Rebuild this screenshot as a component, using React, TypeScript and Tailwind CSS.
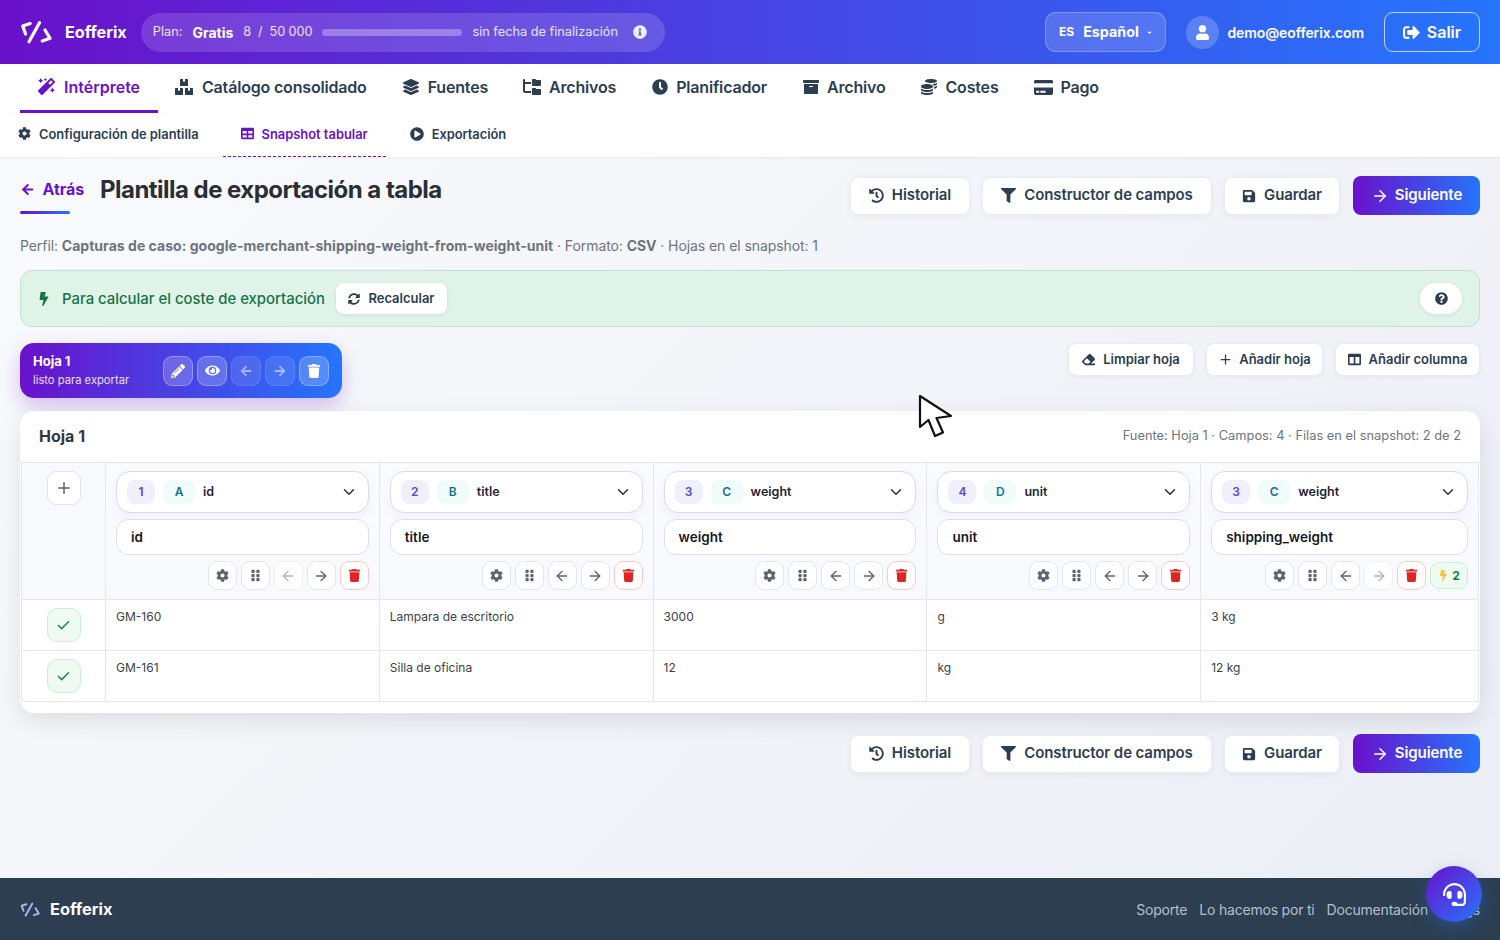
import React from "react";
import {
  FaMagic, FaBoxes, FaLayerGroup, FaClock, FaArchive, FaCoins, FaCreditCard, FaCog, FaTable, FaPlayCircle,
  FaHistory, FaFilter, FaSave, FaSignOutAlt, FaUser, FaInfoCircle, FaBolt, FaSyncAlt, FaQuestionCircle,
  FaPencilAlt, FaEye, FaTrash, FaEraser, FaColumns, FaGripVertical, FaHeadset, FaArrowLeft, FaArrowRight, FaCaretDown,
} from "react-icons/fa";
import { FaFolderTree } from "react-icons/fa6";
import { LuArrowLeft, LuArrowRight, LuCheck, LuChevronDown, LuPlus } from "react-icons/lu";

function Logo({ className }: { className: string }) {
  return (
    <svg viewBox="0 0 32 24" className={className} fill="none" stroke="currentColor" strokeWidth="3.2" strokeLinecap="round" strokeLinejoin="round">
      <path d="M10.2 3.6 L2.7 6 L5.6 14" />
      <path d="M19.5 2.7 L9 21.7" />
      <path d="M25 10 L30 18.3 L22.3 21" />
    </svg>
  );
}

function ActionButtons() {
  return (
    <div className="flex items-center gap-[12px] tracking-[-0.1px]">
      <button className="flex h-[38px] w-[120px] items-center justify-center gap-[8px] rounded-lg border border-[#e9ecf1] bg-white text-[15px] font-semibold text-[#2c3e50] shadow-[0_2px_6px_rgba(0,0,0,0.05)]">
        <FaHistory className="text-[15px]" />Historial
      </button>
      <button className="flex h-[38px] w-[230px] items-center justify-center gap-[8px] rounded-lg border border-[#e9ecf1] bg-white text-[15px] font-semibold text-[#2c3e50] shadow-[0_2px_6px_rgba(0,0,0,0.05)]">
        <FaFilter className="text-[15px]" />Constructor de campos
      </button>
      <button className="flex h-[38px] w-[116px] items-center justify-center gap-[8px] rounded-lg border border-[#e9ecf1] bg-white text-[15px] font-semibold text-[#2c3e50] shadow-[0_2px_6px_rgba(0,0,0,0.05)]">
        <FaSave className="text-[14px]" />Guardar
      </button>
      <button className="ml-px flex h-[39px] w-[127px] items-center justify-center gap-[6px] rounded-lg bg-[linear-gradient(90deg,#6a11cb,#2575fc)] text-[15px] font-semibold text-white">
        <LuArrowRight className="text-[18px]" />Siguiente
      </button>
    </div>
  );
}

function MiniBtn({ children, tone = "normal" }: { children: React.ReactNode; tone?: "normal" | "off" | "red" }) {
  const cls =
    tone === "red"
      ? "border-[#f6c9c9] text-[#dc2626]"
      : tone === "off"
        ? "border-[#eef0f4] text-[#b0b5bc]"
        : "border-[#e2e5ea] text-[#5a6472]";
  return <span className={`flex h-[29px] w-[29px] items-center justify-center rounded-[9px] border bg-white text-[13px] ${cls}`}>{children}</span>;
}

type Col = { n: string; l: string; src: string; name: string; leftOff?: boolean; rightOff?: boolean; badge?: boolean };
const cols: Col[] = [
  { n: "1", l: "A", src: "id", name: "id", leftOff: true },
  { n: "2", l: "B", src: "title", name: "title" },
  { n: "3", l: "C", src: "weight", name: "weight" },
  { n: "4", l: "D", src: "unit", name: "unit" },
  { n: "3", l: "C", src: "weight", name: "shipping_weight", rightOff: true, badge: true },
];

const rows = [
  ["GM-160", "Lampara de escritorio", "3000", "g", "3 kg"],
  ["GM-161", "Silla de oficina", "12", "kg", "12 kg"],
];

function HeaderCell({ c }: { c: Col }) {
  return (
    <div className="flex h-[136px] flex-col border-l border-[#e3e6ec] bg-[linear-gradient(180deg,#fafbfe,#f8f9fc)] px-[10px] pt-[8px]">
      <div className="flex h-[42px] items-center rounded-[14px] border border-[#dcd8ef] bg-white pl-[10px] pr-[10px] shadow-[0_4px_12px_rgba(106,17,203,0.05)]">
        <span className="flex h-[24px] w-[28px] items-center justify-center rounded-lg bg-[#eff0fc] text-[12px] font-semibold text-[#5b45d6]">{c.n}</span>
        <span className="ml-[8px] flex h-[24px] w-[32px] items-center justify-center rounded-lg bg-[#f0fbfb] text-[12px] font-semibold text-[#14708f]">{c.l}</span>
        <span className="ml-[8px] text-[12.5px] font-semibold text-[#1f2433]">{c.src}</span>
        <LuChevronDown className="ml-auto text-[18px] text-[#2b2f38]" />
      </div>
      <div className="mt-[6px] flex h-[36px] items-center rounded-[12px] border border-[#dfdcf0] bg-white pl-[14px] text-[13.5px] font-semibold text-[#15181f]">{c.name}</div>
      <div className="mt-[6px] flex items-center justify-end gap-[4px]">
        <MiniBtn><FaCog /></MiniBtn>
        <MiniBtn><FaGripVertical /></MiniBtn>
        <MiniBtn tone={c.leftOff ? "off" : "normal"}><LuArrowLeft className="text-[16px]" /></MiniBtn>
        <MiniBtn tone={c.rightOff ? "off" : "normal"}><LuArrowRight className="text-[16px]" /></MiniBtn>
        <MiniBtn tone="red"><FaTrash /></MiniBtn>
        {c.badge && (
          <span className="flex h-[27px] w-[38px] items-center justify-center gap-[3px] rounded-[9px] border border-[#c9efd4] bg-[#effbf2] text-[12px] font-bold text-[#15803d]">
            <FaBolt className="text-[11px] text-[#f5c542]" />2
          </span>
        )}
      </div>
    </div>
  );
}

export default function App() {
  return (
    <div className="relative flex h-[940px] w-[1500px] flex-col overflow-hidden bg-white font-['Inter',sans-serif]">
      <header className="flex h-[64px] shrink-0 items-center bg-[linear-gradient(90deg,#6a11cb,#2575fc)] pl-[20px] pr-[20px] text-white">
        <Logo className="h-[24px] w-[32px]" />
        <span className="ml-[13px] text-[16.2px] font-bold">Eofferix</span>
        <div className="ml-[14px] flex h-[39px] w-[524px] items-center rounded-[20px] bg-white/15 pl-[12px] text-[12.75px]">
          <span className="text-white/85">Plan:</span>
          <span className="ml-[10px] text-[14px] font-bold">Gratis</span>
          <span className="ml-[10px] tracking-[-0.1px] text-white/85">8&nbsp;&nbsp;/&nbsp;&nbsp;50 000</span>
          <span className="ml-[10px] h-[7px] w-[140px] rounded-full bg-white/30" />
          <span className="ml-[10px] text-white/85">sin fecha de finalización</span>
          <FaInfoCircle className="ml-[15px] text-[14px] text-white/90" />
        </div>
        <div className="ml-auto flex h-[40px] w-[121px] items-center justify-center rounded-[11px] border border-white/25 bg-white/15 text-[14.3px] font-bold">
          <span className="text-[12px]">ES</span>
          <span className="ml-[9px]">Español</span>
          <FaCaretDown className="ml-[7px] text-[7px]" />
        </div>
        <span className="ml-[20px] flex h-[33px] w-[33px] items-center justify-center rounded-full bg-white/20">
          <FaUser className="text-[15px]" />
        </span>
        <span className="ml-[8px] text-[14px] font-semibold tracking-[-0.1px]">demo@eofferix.com</span>
        <button className="ml-[20px] flex h-[40px] w-[96px] items-center justify-center gap-[7px] rounded-[9px] border border-white/70 text-[16px] font-semibold">
          <FaSignOutAlt className="text-[17px]" />Salir
        </button>
      </header>

      <nav className="flex h-[49px] shrink-0 items-start bg-white pl-[20px] text-[16px] font-semibold tracking-[-0.18px] text-[#2c3e50]">
        <a className="flex h-[49px] w-[138px] items-center gap-[9px] border-b-[3px] border-[#6a11cb] pb-[1px] pl-[18px] tracking-normal text-[#6a11cb]"><FaMagic className="text-[17px]" />Intérprete</a>
        <a className="ml-[17px] flex h-[46px] items-center gap-[9px]"><FaBoxes className="text-[18px]" />Catálogo consolidado</a>
        <a className="ml-[36px] flex h-[46px] items-center gap-[9px]"><FaLayerGroup className="text-[16px]" />Fuentes</a>
        <a className="ml-[35px] flex h-[46px] items-center gap-[8px]"><FaFolderTree className="text-[18px]" />Archivos</a>
        <a className="ml-[36px] flex h-[46px] items-center gap-[8px]"><FaClock className="text-[16px]" />Planificador</a>
        <a className="ml-[36px] flex h-[46px] items-center gap-[8px]"><FaArchive className="text-[16px]" />Archivo</a>
        <a className="ml-[35px] flex h-[46px] items-center gap-[9px]"><FaCoins className="text-[16px]" />Costes</a>
        <a className="ml-[35px] flex h-[46px] items-center gap-[8px]"><FaCreditCard className="text-[19px]" />Pago</a>
      </nav>

      <div className="z-10 flex h-[44px] shrink-0 items-center bg-white pl-[18px] text-[12.9px] font-semibold text-[#2c3e50] shadow-[0_1px_3px_rgba(0,0,0,0.06)]">
        <a className="flex items-center gap-[8px]"><FaCog className="-translate-y-px text-[13px]" />Configuración de plantilla</a>
        <a className="ml-[24px] flex h-[44px] w-[163px] items-center justify-center gap-[8px] border-b border-dashed border-[#6a11cb] pt-px text-[#6a11cb]"><FaTable className="-translate-y-[2px] text-[13px]" />Snapshot tabular</a>
        <a className="ml-[24px] flex items-center gap-[8px] tracking-[-0.05px]"><FaPlayCircle className="-translate-y-px text-[14px]" />Exportación</a>
      </div>

      <main className="flex min-h-0 flex-1 flex-col bg-[linear-gradient(135deg,#f9fafd,#ebeef5)] px-[20px] pt-[19px]">
        <div className="flex items-start justify-between">
          <div className="flex items-start">
            <div className="w-[64px]">
              <a className="flex items-center gap-[7px] pt-[1px] text-[16px] font-bold tracking-[-0.1px] text-[#6a11cb]"><LuArrowLeft className="text-[17px]" strokeWidth={3} />Atrás</a>
              <div className="mt-[10px] h-[3px] w-[50px] rounded-full bg-[linear-gradient(90deg,#6a11cb,#2575fc)]" />
            </div>
            <h1 className="ml-[16px] text-[24px] leading-[28px] font-bold tracking-[-0.53px] text-[#2b2f33]">Plantilla de exportación a tabla</h1>
          </div>
          <ActionButtons />
        </div>

        <p className="mt-[21px] text-[14px] leading-[20px] tracking-[-0.08px] text-[#6c757d]">
          Perfil: <b className="font-bold tracking-[0.03px]">Capturas de caso: google-merchant-shipping-weight-from-weight-unit</b> · Formato: <b className="font-bold">CSV</b> · Hojas en el snapshot: 1
        </p>

        <div className="mt-[14px] flex h-[57px] items-center rounded-[12px] border border-[#bce5cd] bg-[#dff3e8] pl-[16px] pr-[17px]">
          <FaBolt className="text-[14px] text-[#157347]" />
          <span className="ml-[11px] pt-px text-[14.9px] font-medium text-[#157347]">Para calcular el coste de exportación</span>
          <button className="ml-[11px] flex h-[31px] w-[111px] items-center justify-center gap-[8px] rounded-lg bg-white text-[13px] font-semibold text-[#2c3e50] shadow-[0_1px_4px_rgba(0,0,0,0.08)]">
            <FaSyncAlt className="text-[12px]" />Recalcular
          </button>
          <span className="ml-auto flex h-[31px] w-[42px] items-center justify-center rounded-full bg-white text-[13px] text-[#2c3e50] shadow-[0_1px_4px_rgba(0,0,0,0.08)]">
            <FaQuestionCircle />
          </span>
        </div>

        <div className="mt-[16px] flex items-center justify-between">
          <div className="flex h-[55px] w-[322px] items-center rounded-[14px] bg-[linear-gradient(90deg,#6a11cb,#2575fc)] pl-[13px] pr-[13px] text-white shadow-[0_8px_20px_rgba(106,17,203,0.25)]">
            <div>
              <div className="text-[13px] leading-[16px] font-bold">Hoja 1</div>
              <div className="mt-[3px] text-[11.2px] leading-[16px] text-white/85">listo para exportar</div>
            </div>
            <div className="ml-auto flex gap-[4px] text-[14px]">
              <span className="flex h-[30px] w-[30px] items-center justify-center rounded-[9px] border border-white/30 bg-white/20"><FaPencilAlt /></span>
              <span className="flex h-[30px] w-[30px] items-center justify-center rounded-[9px] border border-white/30 bg-white/20"><FaEye className="text-[15px]" /></span>
              <span className="flex h-[30px] w-[30px] items-center justify-center rounded-[9px] border border-white/10 bg-white/10 text-white/50"><FaArrowLeft className="text-[12px]" /></span>
              <span className="flex h-[30px] w-[30px] items-center justify-center rounded-[9px] border border-white/10 bg-white/10 text-white/50"><FaArrowRight className="text-[12px]" /></span>
              <span className="flex h-[30px] w-[30px] items-center justify-center rounded-[9px] border border-white/30 bg-white/20"><FaTrash /></span>
            </div>
          </div>
          <div className="-mt-[22px] flex gap-[12px] text-[13px] font-semibold text-[#2c3e50]">
            <button className="flex h-[33px] w-[126px] items-center justify-center gap-[8px] rounded-lg border border-[#e9ecf1] bg-white shadow-[0_1px_4px_rgba(0,0,0,0.05)]"><FaEraser className="text-[13px]" />Limpiar hoja</button>
            <button className="flex h-[33px] w-[117px] items-center justify-center gap-[6px] rounded-lg border border-[#e9ecf1] bg-white shadow-[0_1px_4px_rgba(0,0,0,0.05)]"><LuPlus className="text-[15px]" />Añadir hoja</button>
            <button className="flex h-[33px] w-[145px] items-center justify-center gap-[8px] rounded-lg border border-[#e9ecf1] bg-white shadow-[0_1px_4px_rgba(0,0,0,0.05)]"><FaColumns className="text-[13px]" />Añadir columna</button>
          </div>
        </div>

        <section className="mt-[13px] rounded-[14px] bg-white pb-[11px] shadow-[0_8px_24px_rgba(0,0,0,0.1)]">
          <div className="flex h-[51px] items-center justify-between pb-[2px] pl-[19px] pr-[19px]">
            <h2 className="text-[16px] font-bold text-[#33373c]">Hoja 1</h2>
            <span className="text-[12.85px] text-[#6c757d]">Fuente: Hoja 1 · Campos: 4 · Filas en el snapshot: 2 de 2</span>
          </div>
          <div className="mx-px grid grid-cols-[83px_repeat(4,273.8px)_1fr] border border-[#e3e6ec]">
            <div className="flex h-[136px] justify-center bg-[#f8f9fc] pt-[8px]">
              <span className="flex h-[34px] w-[34px] items-center justify-center rounded-[9px] border border-[#e2e5ea] bg-white text-[18px] text-[#5a6472]"><LuPlus /></span>
            </div>
            {cols.map((c, i) => <HeaderCell key={i} c={c} />)}
            {rows.map((r, i) => (
              <React.Fragment key={i}>
                <div className="flex h-[51px] justify-center border-t border-[#e3e6ec] pt-[8px]">
                  <span className="flex h-[34px] w-[34px] items-center justify-center rounded-[10px] border border-[#c9efd4] bg-[#effbf2] text-[15px] text-[#1f8a55]"><LuCheck strokeWidth={2.5} /></span>
                </div>
                {r.map((v, j) => (
                  <div key={j} className="h-[51px] border-t border-l border-[#e3e6ec] pl-[10px] pt-[9px] text-[12px] leading-[16px] text-[#3a3f45]">{v}</div>
                ))}
              </React.Fragment>
            ))}
          </div>
        </section>

        <div className="mt-[21px] flex justify-end"><ActionButtons /></div>
      </main>

      <footer className="flex h-[62px] shrink-0 items-center bg-[#2c3e50] pl-[20px] pr-[20px]">
        <Logo className="h-[15px] w-[20px] text-[#aeb1ee]" />
        <span className="ml-[10px] text-[16.4px] font-bold text-white">Eofferix</span>
        <div className="ml-auto flex gap-[12px] text-[14px] tracking-[-0.2px] text-[#b4c0cc]">
          <span>Soporte</span>
          <span>Lo hacemos por ti</span>
          <span>Documentación</span>
          <span className="w-[40px] text-right">Blogs</span>
        </div>
      </footer>

      <span className="absolute left-[1426px] top-[866px] flex h-[56px] w-[56px] items-center justify-center rounded-full bg-[linear-gradient(135deg,#6a11cb,#2575fc)] text-[23px] text-white shadow-[0_6px_18px_rgba(37,117,252,0.3)]">
        <FaHeadset />
      </span>

      <svg className="absolute left-[918px] top-[394px] h-[46px] w-[36px]" viewBox="0 0 36 46" fill="white" stroke="#111" strokeWidth="2.2" strokeLinejoin="round">
        <path d="M2 2 L2 33 L10.5 26 L17 42 L25 38.5 L18.5 24 L33 22 Z" />
      </svg>
    </div>
  );
}
